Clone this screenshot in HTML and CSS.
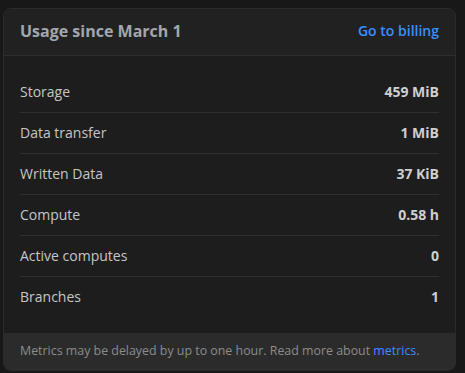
FILE: index.html
```html
<!DOCTYPE html>
<html lang="en">
<head>
    <meta charset="UTF-8">
    <meta name="viewport" content="width=device-width, initial-scale=1.0">
    <title>Usage</title>
    <link rel="stylesheet" href="styles.css">
</head>
<body>
    <div class="usage-card">
        <div class="usage-header">
            <h2>Usage since March 1</h2>
            <a href="#" class="link">Go to billing</a>
        </div>

        <div class="usage-body">
            <div class="usage-row">
                <span class="label">Storage</span>
                <span class="value">459 MiB</span>
            </div>
            <div class="usage-row">
                <span class="label">Data transfer</span>
                <span class="value">1 MiB</span>
            </div>
            <div class="usage-row">
                <span class="label">Written Data</span>
                <span class="value">37 KiB</span>
            </div>
            <div class="usage-row">
                <span class="label">Compute</span>
                <span class="value">0.58 h</span>
            </div>
            <div class="usage-row">
                <span class="label">Active computes</span>
                <span class="value">0</span>
            </div>
            <div class="usage-row">
                <span class="label">Branches</span>
                <span class="value">1</span>
            </div>
        </div>

        <div class="usage-footer">
            Metrics may be delayed by up to one hour. Read more about <a href="#" class="link">metrics</a>.
        </div>
    </div>
</body>
</html>
```

FILE: styles.css
```css
body {
    font-family: "Open Sans", "Noto Sans", sans-serif;
    background: #181818;
    margin: 0;
    padding: 8px 9px 0 3px;
    color: #c9c9c9;
}

.usage-card {
    background: #1d1d1d;
    border: 1px solid #2b2b2b;
    border-radius: 8px;
    overflow: hidden;
    box-sizing: border-box;
    width: 453px;
}

.usage-header {
    display: flex;
    justify-content: space-between;
    align-items: center;
    height: 47px;
    padding: 0 16px 3px;
    box-sizing: border-box;
    background: #212121;
    border-bottom: 1px solid #2e2e2e;
}

.usage-header h2 {
    margin: 0;
    font-size: 16px;
    font-weight: 700;
    color: #a3a7ad;
}

.link {
    color: #3b8eff;
    text-decoration: none;
}

.usage-header .link {
    font-size: 14px;
    font-weight: 600;
}

.usage-body {
    padding: 16px 16px;
}

.usage-row {
    display: flex;
    justify-content: space-between;
    align-items: center;
    height: 41px;
    padding-bottom: 2px;
    box-sizing: border-box;
    border-bottom: 1px solid #2f2f2f;
    font-size: 14px;
}

.usage-row:last-child {
    height: 40px;
    border-bottom: none;
}

.label {
    color: #c6c6c6;
}

.value {
    font-weight: 700;
    color: #cfcfcf;
}

.usage-footer {
    background: #2b2b2b;
    padding: 9px 16px 11px;
    font-size: 12.4px;
    white-space: nowrap;
    color: #8c8c8c;
}
```
